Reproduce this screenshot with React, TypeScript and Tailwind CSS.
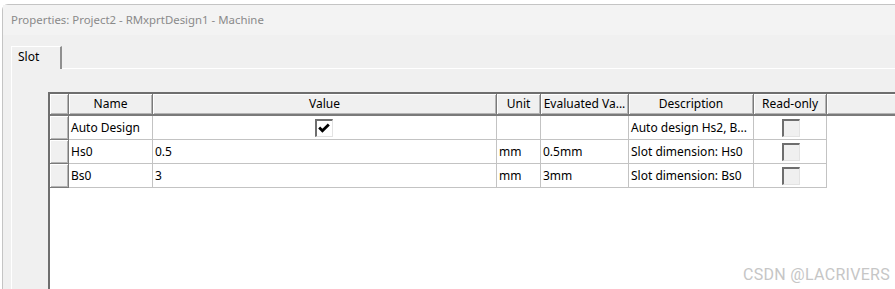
const cols = [
  { label: "Name", w: "w-[84px]" },
  { label: "Value", w: "w-[344px]" },
  { label: "Unit", w: "w-[44px]" },
  { label: "Evaluated Va...", w: "w-[88px]" },
  { label: "Description", w: "w-[125px]" },
  { label: "Read-only", w: "w-[73px]" },
];

const rows = [
  { name: "Auto Design", value: "", check: true, unit: "", evaluated: "", desc: "Auto design Hs2, B..." },
  { name: "Hs0", value: "0.5", check: false, unit: "mm", evaluated: "0.5mm", desc: "Slot dimension: Hs0" },
  { name: "Bs0", value: "3", check: false, unit: "mm", evaluated: "3mm", desc: "Slot dimension: Bs0" },
];

function CheckBox({ checked, disabled }: { checked?: boolean; disabled?: boolean }) {
  return (
    <span
      className={`grid h-[18px] w-[18px] place-items-center border-l-2 border-t-2 border-r border-b border-l-[#6e6e6e] border-t-[#6e6e6e] border-r-[#e3e3e3] border-b-[#e3e3e3] ${
        disabled ? "bg-[#f0f0f0]" : "bg-white"
      }`}
    >
      {checked && (
        <svg width="12" height="10" viewBox="0 0 12 10" aria-hidden="true">
          <path d="M1.2 4.6 4.4 7.8 10.8 1.4" fill="none" stroke="#000" strokeWidth="2.8" />
        </svg>
      )}
    </span>
  );
}

const headCell =
  "flex h-[22px] items-center justify-center bg-[#f0f0f0] border-b-2 border-b-[#7a7a7a] shadow-[inset_1px_1px_0_#ffffff,inset_-1px_-1px_0_#b4b4b4]";
const dataCell = "flex h-[24px] items-center border-r border-b border-[#c3c3c3] pl-[2px] whitespace-nowrap overflow-hidden";

export default function App() {
  return (
    <div className="relative h-[289px] w-[895px] overflow-hidden bg-white font-['Noto_Sans',sans-serif] text-[12px] text-black">
      <div className="ml-[2px] mt-[4px] flex h-[285px] w-[900px] flex-col rounded-tl-[6px] border-l border-t border-[#c4c4c4] bg-[#f0f0f0]">
        <div className="flex h-[30px] items-center bg-[#f3f3f3] pl-[8px] text-[11.4px] text-[#8a8a8a]">
          Properties: Project2 - RMxprtDesign1 - Machine
        </div>

        <div className="flex pl-[8px] pt-[11px]">
          <div className="flex h-[23px] w-[51px] items-center border-l border-t border-r-2 border-l-white border-t-white border-r-[#8f8f8f] bg-[#f0f0f0] pb-[2px] pl-[6px]">
            Slot
          </div>
          <div className="flex-1 border-b border-white" />
        </div>

        <div className="ml-[8px] flex-1 border-l border-white pl-[36px] pt-[23px]">
          <div className="h-full border-l-2 border-t-2 border-[#6e6e6e] bg-white">
            <div className="flex">
              <div className={`${headCell} w-[19px] border-r border-r-[#7a7a7a]`} />
              {cols.map((c) => (
                <div key={c.label} className={`${headCell} ${c.w} border-r border-r-[#7a7a7a] whitespace-nowrap`}>
                  {c.label}
                </div>
              ))}
              <div className={`${headCell} flex-1`} />
            </div>
            {rows.map((r) => (
              <div key={r.name} className="flex">
                <div className="h-[24px] w-[19px] border-r border-b border-[#7a7a7a] bg-[#f0f0f0] shadow-[inset_1px_1px_0_#ffffff,inset_-1px_-1px_0_#b4b4b4]" />
                <div className={`${dataCell} w-[84px]`}>{r.name}</div>
                <div className={`${dataCell} w-[344px] ${r.check ? "justify-center pl-0 pr-[4px]" : ""}`}>
                  {r.check ? <CheckBox checked /> : r.value}
                </div>
                <div className={`${dataCell} w-[44px]`}>{r.unit}</div>
                <div className={`${dataCell} w-[88px]`}>{r.evaluated}</div>
                <div className={`${dataCell} w-[125px]`}>{r.desc}</div>
                <div className={`${dataCell} w-[73px] justify-center pl-0`}>
                  <CheckBox disabled />
                </div>
              </div>
            ))}
          </div>
        </div>
      </div>

      <div className="absolute left-[743px] top-[263px] font-['Roboto',sans-serif] text-[16px] tracking-[0.3px] text-[#c6c6c6]">
        CSDN @LACRIVERS
      </div>
    </div>
  );
}
